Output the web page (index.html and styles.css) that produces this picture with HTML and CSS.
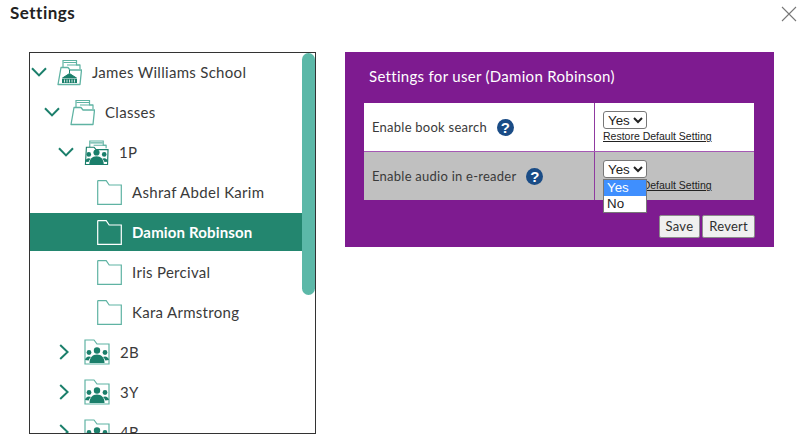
FILE: index.html
```html
<!DOCTYPE html>
<html lang="en">
<head>
<meta charset="utf-8">
<title>Settings</title>
<link rel="stylesheet" href="styles.css">
</head>
<body>
<svg class="defs" width="0" height="0" aria-hidden="true">
  <defs>
    <symbol id="chev-down" viewBox="0 0 16 10"><path d="M1 1.2 8 8.4 15 1.2" fill="none" stroke="#1b7f6b" stroke-width="2"/></symbol>
    <symbol id="chev-right" viewBox="0 0 10 16"><path d="M1.2 1 8.6 8 1.2 15" fill="none" stroke="#1b7f6b" stroke-width="2"/></symbol>
    <symbol id="open-folder" viewBox="0 0 25 27">
      <path d="M6 9V1.500h13.500V6h3.500v4" fill="none" stroke="#5fb3a3" stroke-width="1.200"/>
      <path d="M6.500 3.500h12.500M10 6h13" stroke="#5fb3a3" stroke-width="1.200"/>
      <path d="M4 8.500h7l2 2.500h11.500l-1.500 14.500H1z" fill="#fff" stroke="#5fb3a3" stroke-width="1.300" stroke-linejoin="round"/>
    </symbol>
    <symbol id="folder" viewBox="0 0 25 25">
      <path d="M.7 24.300V1.200q0-.5.500-.5h8l3 4.300h12.100v19.300z" fill="none" stroke="currentColor" stroke-width="1.200"/>
    </symbol>
    <g id="people">
      <circle cx="13" cy="12.500" r="3.200" fill="#1b7f6b"/>
      <circle cx="5" cy="14.500" r="2.400" fill="#1b7f6b"/>
      <circle cx="21" cy="14.500" r="2.400" fill="#1b7f6b"/>
      <path d="M5.500 25c0-5.500 3-8.500 7.500-8.500s7.500 3 7.500 8.500z" fill="#1b7f6b"/>
      <path d="M1 22c.5-2 2-3.500 4-3.500 .8 0 1.500.2 2 .5-1 1-1.800 2-2.300 3.500zM25 22c-.5-2-2-3.500-4-3.500-.8 0-1.500.2-2 .5 1 1 1.800 2 2.300 3.500z" fill="#1b7f6b"/>
    </g>
    <symbol id="group-folder" viewBox="0 0 26 26">
      <path d="M1 25V1h9l3 4h12v20z" fill="#fff" stroke="#5fb3a3" stroke-width="1.200"/>
      <use href="#people" y="-1"/>
    </symbol>
    <symbol id="group-open" viewBox="0 0 26 27">
      <path d="M6 8V1.500h14V6h3v3" fill="none" stroke="#5fb3a3" stroke-width="1.200"/>
      <path d="M6.500 3.500h13M10 6h13" stroke="#5fb3a3" stroke-width="1.200"/>
      <path d="M2.500 8h8l2 2.500h12.500L24.500 26h-23z" fill="#fff" stroke="#1b7f6b" stroke-width="1.200"/>
      <use href="#people" y="1"/>
    </symbol>
    <symbol id="school" viewBox="0 0 25 27">
      <path d="M6 9V1.500h13.500V6h3.500v4" fill="none" stroke="#5fb3a3" stroke-width="1.200"/>
      <path d="M6.500 3.500h12.500M10 6h13" stroke="#5fb3a3" stroke-width="1.200"/>
      <path d="M4 8.500h7l2 2.500h11.500l-1.500 14.500H1z" fill="#fff" stroke="#5fb3a3" stroke-width="1.300" stroke-linejoin="round"/>
      <path d="M12.500 11v3M5.500 19l7-4.500 7 4.500z" fill="#1b7f6b" stroke="#1b7f6b"/>
      <path d="M5 20h15v4H5z" fill="#1b7f6b"/>
      <path d="M7.500 20.500v3M10 20.500v3M12.500 20.500v3M15 20.500v3M17.500 20.500v3" stroke="#fff" stroke-width=".8"/>
    </symbol>
  </defs>
</svg>

<header class="header">
  <h1 class="title">Settings</h1>
  <button class="close" type="button" aria-label="Close">
    <svg width="16" height="16" viewBox="0 0 16 16"><path d="M1 1 15 15M15 1 1 15" stroke="#777" stroke-width="1.100" fill="none"/></svg>
  </button>
</header>

<main class="content">
  <div class="tree">
    <ul class="tree-list">
      <li class="row level-0"><svg class="chev-d"><use href="#chev-down"/></svg><svg class="icon"><use href="#school"/></svg><span>James Williams School</span></li>
      <li class="row level-1"><svg class="chev-d"><use href="#chev-down"/></svg><svg class="icon"><use href="#open-folder"/></svg><span>Classes</span></li>
      <li class="row level-2"><svg class="chev-d"><use href="#chev-down"/></svg><svg class="icon"><use href="#group-open"/></svg><span>1P</span></li>
      <li class="row leaf"><svg class="icon"><use href="#folder"/></svg><span>Ashraf Abdel Karim</span></li>
      <li class="row leaf selected"><svg class="icon"><use href="#folder"/></svg><span>Damion Robinson</span></li>
      <li class="row leaf"><svg class="icon"><use href="#folder"/></svg><span>Iris Percival</span></li>
      <li class="row leaf"><svg class="icon"><use href="#folder"/></svg><span>Kara Armstrong</span></li>
      <li class="row level-2 closed"><svg class="chev-r"><use href="#chev-right"/></svg><svg class="icon"><use href="#group-folder"/></svg><span>2B</span></li>
      <li class="row level-2 closed"><svg class="chev-r"><use href="#chev-right"/></svg><svg class="icon"><use href="#group-folder"/></svg><span>3Y</span></li>
      <li class="row level-2 closed"><svg class="chev-r"><use href="#chev-right"/></svg><svg class="icon"><use href="#group-folder"/></svg><span>4B</span></li>
    </ul>
    <div class="thumb"></div>
  </div>

  <section class="panel">
    <h2 class="panel-title">Settings for user (Damion Robinson)</h2>
    <div class="grid">
      <div class="cell label-cell">
        <span>Enable book search</span><span class="help">?</span>
      </div>
      <div class="cell value-cell">
        <select class="picker"><option>Yes</option><option>No</option></select>
        <a class="restore" href="#">Restore Default Setting</a>
      </div>
      <div class="cell label-cell alt">
        <span>Enable audio in e-reader</span><span class="help">?</span>
      </div>
      <div class="cell value-cell alt">
        <select class="picker"><option>Yes</option><option>No</option></select>
        <a class="restore" href="#">Restore Default Setting</a>
        <ul class="dropdown">
          <li class="option active">Yes</li>
          <li class="option">No</li>
        </ul>
      </div>
    </div>
    <div class="actions">
      <button class="btn" type="button">Save</button>
      <button class="btn" type="button">Revert</button>
    </div>
  </section>
</main>
</body>
</html>
```

FILE: styles.css
```css
* { box-sizing: border-box; }

html, body {
  margin: 0;
  height: 100%;
  background: #fff;
  overflow: hidden;
}

body {
  font-family: "Lato", "Noto Sans", sans-serif;
  color: #2f2f2f;
}

.defs { position: absolute; }

.header {
  display: flex;
  justify-content: space-between;
  align-items: flex-start;
  height: 52px;
  padding: 3px 8px 0 10px;
}

.title {
  margin: 0;
  font: 700 17px/20px "Lato", sans-serif;
  color: #222;
  letter-spacing: .5px;
}

.close {
  margin-top: 3px;
  padding: 0;
  border: 0;
  width: 16px;
  height: 16px;
  background: none;
}

.close svg { display: block; }

.content {
  display: flex;
  align-items: flex-start;
  gap: 29px;
  padding-left: 29px;
}

.tree {
  position: relative;
  width: 287px;
  height: 382px;
  border: 1px solid #333;
  overflow: hidden;
}

.tree-list {
  margin: -1px 0 0;
  padding: 0;
  list-style: none;
}

.row {
  display: flex;
  align-items: center;
  height: 40px;
  font: 400 15px/20px "Lato", sans-serif;
  letter-spacing: .3px;
  color: #3a3a3a;
  white-space: nowrap;
}

.level-0 { padding-left: 1px; }
.level-1 { padding-left: 14px; }
.level-2 { padding-left: 28px; }
.leaf { padding-left: 67px; }

.selected {
  height: 38px;
  margin: 1px 0;
  background: #23866f;
  color: #fff;
  font-weight: 700;
  letter-spacing: .15px;
}

.chev-d { width: 16px; height: 10px; margin-right: 10px; flex: none; }
.chev-r { width: 10px; height: 16px; margin: 0 15px 0 1px; flex: none; }
.icon { width: 25px; height: 27px; margin-right: 10px; flex: none; color: #5fb3a3; }
.selected .icon { color: #fff; }
.closed .icon { width: 26px; height: 26px; }

.thumb {
  position: absolute;
  top: 0;
  right: 0;
  width: 13px;
  height: 242px;
  border-radius: 7px;
  background: #5cb8a8;
}

.panel {
  width: 429px;
  height: 195px;
  padding: 14px 20px 0 19px;
  background: #7e1b90;
}

.panel-title {
  margin: 0 0 17px 5px;
  font: 400 15px/20px "Lato", sans-serif;
  letter-spacing: .3px;
  color: #fff;
}

.grid {
  display: grid;
  grid-template-columns: 230px 160px;
  grid-auto-rows: 48px;
  row-gap: 1px;
  background: #a559b4;
}

.cell {
  position: relative;
  background: #fff;
}

.cell.alt { background: #c0c0c0; }

.label-cell {
  display: flex;
  align-items: center;
  padding-left: 8px;
  font: 400 13px/16px "Lato", sans-serif;
  color: #3a3a3a;
  letter-spacing: .25px;
}

.value-cell {
  padding: 8px 0 0 8px;
  border-left: 1px solid #8f3aa0;
}

.help {
  display: inline-block;
  flex: none;
  width: 17px;
  height: 17px;
  margin-left: 10px;
  border-radius: 50%;
  background: #1a4c86;
  color: #fff;
  font: 700 15px/17px "Liberation Sans", sans-serif;
  text-align: center;
}

.picker {
  display: block;
  width: 44px;
  height: 18px;
  padding: 0;
  font: 13.333px "Liberation Sans", sans-serif;
  color: #222;
  background: #fff;
  border: 1px solid #777;
  border-radius: 3px;
}

.restore {
  display: block;
  font: 10.5px/12px "Liberation Sans", sans-serif;
  color: #222;
  margin-top: 1px;
  white-space: nowrap;
}

.dropdown {
  position: absolute;
  top: 27px;
  left: 8px;
  width: 44px;
  margin: 0;
  padding: 0;
  list-style: none;
  border: 1px solid #777;
  background: #fff;
  font: 13.333px/15px "Liberation Sans", sans-serif;
  color: #222;
}

.option { padding: 0 0 1px 3px; }
.active { background: #3f8ffe; color: #fff; }

.actions {
  display: flex;
  justify-content: flex-end;
  gap: 2px;
  margin: 15px -1px 0 0;
}

.btn {
  height: 23px;
  padding: 0 6px;
  font: 13px/1 "Lato", sans-serif;
  letter-spacing: .25px;
  color: #2f2f2f;
  background: #f0f0f0;
  border: 1px solid #8c8c8c;
  border-radius: 2px;
}
```
